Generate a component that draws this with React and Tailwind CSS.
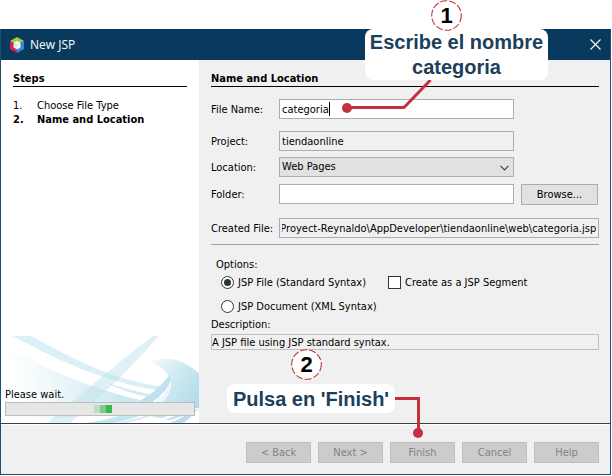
import React, { useEffect, useRef } from "react";

const FIELD =
  "block h-5 w-full rounded-none border border-[#abadb3] px-[2px] leading-[18px] text-black outline-none";

function Row({ id, label, className = "", children }) {
  return (
    <div className={`flex items-center ${className}`}>
      <label htmlFor={id} className="w-[68px] shrink-0 pt-px whitespace-nowrap">
        {label}
      </label>
      {children}
    </div>
  );
}

function Radio({ id, label, defaultChecked }) {
  return (
    <div className="flex h-[14px] items-center gap-1">
      <input
        id={id}
        type="radio"
        name="syntax"
        defaultChecked={defaultChecked}
        className="m-0 grid size-[13px] shrink-0 appearance-none place-items-center rounded-full border border-[#333] bg-white before:size-[7px] before:rounded-full checked:before:bg-[#333]"
      />
      <label htmlFor={id} className="pt-px whitespace-nowrap">
        {label}
      </label>
    </div>
  );
}

function Logo() {
  return (
    <svg width="14" height="16" viewBox="0 0 14 16" aria-hidden="true">
      <path d="M7 0 L14 4 L7 8 L0 4Z" fill="#a4cf3c" />
      <path d="M0 4 L7 8 V16 L0 12Z" fill="#d0215a" />
      <path d="M14 4 L7 8 V16 L14 12Z" fill="#2c8be0" />
      <path d="M7 4 L10.5 6 L7 8 L3.5 6Z" fill="#ffffff" />
      <path d="M3.5 6 L7 8 V12.4 L3.5 10.4Z" fill="#e4e9ee" />
      <path d="M10.5 6 L7 8 V12.4 L10.5 10.4Z" fill="#f5f8fa" />
    </svg>
  );
}

function Swoosh() {
  return (
    <svg
      className="absolute bottom-0 left-[2px] h-[87px] w-[196px]"
      viewBox="3 336 196 87"
      preserveAspectRatio="none"
      aria-hidden="true"
    >
      <defs>
        <linearGradient id="fan" gradientUnits="userSpaceOnUse" x1="20" y1="410" x2="120" y2="390">
          <stop offset="0" stopColor="#ffffff" />
          <stop offset="0.3" stopColor="#f1f9fb" />
          <stop offset="1" stopColor="#cde8f1" />
        </linearGradient>
        <linearGradient id="crescent" gradientUnits="userSpaceOnUse" x1="146" y1="358" x2="199" y2="395">
          <stop offset="0" stopColor="#ffffff" />
          <stop offset="0.4" stopColor="#d9eef5" />
          <stop offset="1" stopColor="#b3dcea" />
        </linearGradient>
      </defs>
      <path d="M3 345 C38 365 82 386 140 400 L134 412 L3 423Z" fill="url(#fan)" />
      <path d="M13 336 H31 C62 353 112 381 166 387 L164 391 C112 385 60 362 13 336Z" fill="#dceff6" />
      <path d="M102 381 C122 388 142 393 160 396 L158 399 C138 396 118 389 102 381Z" fill="#d5ecf4" />
      <path d="M153 336 H159 C140 357 114 386 70 423 H47 C88 389 128 354 153 336Z" fill="#bfe2ed" fillOpacity="0.5" />
      <path d="M147 360 C155 361 160 358 168 359 C180 359 190 366 199 373 V408 C190 412 188 418 184 423 L150 416 C162 404 174 392 170 380 C168 371 158 365 147 360Z" fill="url(#crescent)" />
      <path d="M170 375 C160 387 150 396 134 404 L150 404 C160 396 168 389 170 382Z" fill="#bfe2ee" />
      <path d="M170 384 C166 393 160 399 153 404 H160 C166 398 170 392 170 384Z" fill="#e9f5f9" />
      <path d="M124 414 H144 C136 418 124 421 112 423 H86 C100 421 114 418 124 414Z" fill="#c5e5ef" />
      <path d="M150 414 H156 C146 418 132 422 124 423 H115 C128 421 142 418 150 414Z" fill="#d0e9f2" />
      <path d="M136 423 C156 421 172 416 182 408 H199 C190 413 188 418 184 423 H150 C168 421 178 418 184 415 L178 415 C166 420 152 422 136 423Z" fill="#ffffff" />
      <path d="M199 408 C193 413 188 418 184 423 H199Z" fill="#ffffff" />
      <path d="M199 408 C187 414 180 419 170 423 H183 C189 420 194 413 199 408Z" fill="#b8deeb" />
    </svg>
  );
}

function Badge({ children, className }) {
  return (
    <div className={`absolute grid size-[31px] place-items-center ${className}`}>
      <svg className="col-start-1 row-start-1" width="31" height="31" viewBox="0 0 31 31" aria-hidden="true">
        <circle cx="15.5" cy="15.5" r="14.8" fill="#fff" stroke="#c5303f" strokeWidth="1.1" strokeDasharray="7 2" />
      </svg>
      <span className="col-start-1 row-start-1 font-['Liberation_Sans',Arial,sans-serif] text-[22px] leading-none font-bold text-black">
        {children}
      </span>
    </div>
  );
}

const CALLOUT =
  "absolute rounded-lg bg-white text-center font-['Liberation_Sans',Arial,sans-serif] text-[20px] leading-[25px] font-bold whitespace-nowrap text-[#1b405b]";

const BUTTONS = ["< Back", "Next >", "Finish", "Cancel", "Help"];

export default function App() {
  const createdFile = useRef(null);

  // Keep the end of the path, with the file name, in view.
  useEffect(() => {
    const showEnd = () => {
      createdFile.current.scrollLeft = createdFile.current.scrollWidth;
    };
    showEnd();
    window.addEventListener("resize", showEnd);
    return () => window.removeEventListener("resize", showEnd);
  }, []);

  return (
    <div className="relative flex min-h-screen flex-col bg-white pt-[29px] pr-px pb-px font-['DejaVu_Sans_Condensed','DejaVu_Sans',Tahoma,sans-serif] text-[11px] leading-[14px] text-black">
      <div className="flex flex-1 flex-col border border-t-0 border-[#1f4e75] bg-[#f0f0f0]">
        <header className="flex h-[31px] items-center bg-[#093a5e] pr-[9px] pl-[9px] text-white">
          <Logo />
          <h1 className="ml-[6px] flex-1 font-['Open_Sans','Noto_Sans',sans-serif] text-[12px] leading-4">New JSP</h1>
          <button type="button" aria-label="Close" className="grid size-3 place-items-center">
            <svg width="11" height="11" viewBox="0 0 11 11" aria-hidden="true">
              <path d="M0.5 0.5 L10.5 10.5 M10.5 0.5 L0.5 10.5" stroke="#fff" strokeWidth="1.1" />
            </svg>
          </button>
        </header>

        <main className="flex flex-1">
          <aside className="relative flex w-[198px] shrink-0 flex-col bg-white">
            <Swoosh />
            <div className="relative px-3 pt-3">
              <h2 className="border-b border-black font-bold">Steps</h2>
              <ol className="mt-3">
                <li className="flex">
                  <span className="w-6">1.</span>Choose File Type
                </li>
                <li className="flex font-bold">
                  <span className="w-6">2.</span>Name and Location
                </li>
              </ol>
            </div>
            <div className="relative mt-auto pr-1 pb-[7px] pl-1">
              <p id="wait">Please wait.</p>
              <div
                role="progressbar"
                aria-labelledby="wait"
                className="flex h-[14px] items-center justify-center border border-[#bcbcbc] bg-[#e6e6e6]"
              >
                <span className="ml-[6px] h-2 w-[6px] bg-[#b8dfc0]" />
                <span className="h-2 w-[6px] bg-[#78cb8b]" />
                <span className="h-2 w-[6px] bg-[#36b94f]" />
              </div>
            </div>
          </aside>

          <form className="min-w-0 flex-1 pt-3 pr-[11px] pl-3" onSubmit={(e) => e.preventDefault()}>
            <h2 className="border-b border-black font-bold">Name and Location</h2>
            <Row id="name" label="File Name:" className="mt-3 pr-[85px]">
              <div className="relative flex-1">
                <input id="name" defaultValue="categoria" className={`${FIELD} bg-white`} />
                <span className="absolute top-[3px] left-[50px] h-[14px] w-px bg-black" />
              </div>
            </Row>
            <Row id="project" label="Project:" className="mt-3 pr-[85px]">
              <input id="project" readOnly defaultValue="tiendaonline" className={`${FIELD} bg-[#f0f0f0]`} />
            </Row>
            <Row id="location" label="Location:" className="mt-[6px] pr-[85px]">
              <div className="relative flex-1">
                <select id="location" className={`${FIELD} appearance-none bg-[#e1e1e1]`}>
                  <option>Web Pages</option>
                </select>
                <svg className="pointer-events-none absolute top-2 right-[5px]" width="9" height="6" viewBox="0 0 9 6" aria-hidden="true">
                  <path d="M0.5 0.8 L4.5 4.8 L8.5 0.8" fill="none" stroke="#444" strokeWidth="1.2" />
                </svg>
              </div>
            </Row>
            <div className="mt-[7px] flex items-start gap-[7px] pr-px">
              <Row id="folder" label="Folder:" className="flex-1">
                <input id="folder" className={`${FIELD} bg-white`} />
              </Row>
              <button type="button" className="h-[21px] w-[77px] border border-[#adadad] bg-[#e1e1e1]">
                Browse...
              </button>
            </div>
            <Row id="created" label="Created File:" className="mt-[13px]">
              <input
                ref={createdFile}
                id="created"
                readOnly
                defaultValue="\Proyect-Reynaldo\AppDeveloper\tiendaonline\web\categoria.jsp"
                className={`${FIELD} bg-[#f0f0f0]`}
              />
            </Row>
            <hr className="mt-[6px] border-[#a0a0a0]" />

            <fieldset className="mt-[13px] pl-[5px]">
              <legend className="mb-[3px]">Options:</legend>
              <div className="flex items-center gap-[22px] pl-[5px]">
                <Radio id="standard" label="JSP File (Standard Syntax)" defaultChecked />
                <div className="flex items-center gap-1">
                  <input
                    id="segment"
                    type="checkbox"
                    className="m-0 size-[13px] appearance-none border border-[#333] bg-white checked:bg-[#333]"
                  />
                  <label htmlFor="segment" className="pt-px whitespace-nowrap">
                    Create as a JSP Segment
                  </label>
                </div>
              </div>
              <div className="mt-[9px] pl-[5px]">
                <Radio id="document" label="JSP Document (XML Syntax)" />
              </div>
            </fieldset>
            <label htmlFor="description" className="mt-[5px] block">
              Description:
            </label>
            <input
              id="description"
              readOnly
              defaultValue="A JSP file using JSP standard syntax."
              className="mt-[2px] block h-4 w-full border border-[#c0c0c0] bg-[#f0f0f0] leading-[14px] outline-none"
            />
          </form>
        </main>

        <footer className="flex justify-end gap-[7px] border-t border-[#3f3f3f] pt-[18px] pr-[11px] pb-[11px] shadow-[inset_0_1px_0_#fff]">
          {BUTTONS.map((label) => (
            <button
              key={label}
              type="button"
              disabled
              className="h-[21px] w-[65px] border border-[#bfbfbf] bg-[#cccccc] text-[#838383]"
            >
              {label}
            </button>
          ))}
        </footer>
      </div>

      <svg className="pointer-events-none absolute top-0 left-0" width="612" height="476" viewBox="0 0 612 476" aria-hidden="true">
        <g fill="none" stroke="#c5303f" strokeWidth="3">
          <path d="M347 107.5 H404 L430.5 80" />
          <path d="M395 398.5 H418.5 V430" />
        </g>
        <circle cx="347" cy="108" r="5" fill="#c5303f" />
        <circle cx="418" cy="433" r="5" fill="#c5303f" />
      </svg>
      <p className={`${CALLOUT} top-[29px] left-[365px] w-[183px] pt-px`}>
        Escribe el nombre
        <br />
        categoria
      </p>
      <p className={`${CALLOUT} top-[384px] left-[227px] w-[168px] pt-[3px] pb-px`}>Pulsa en &apos;Finish&apos;</p>
      <Badge className="top-0 left-[431px]">1</Badge>
      <Badge className="top-[349px] left-[291px]">2</Badge>
    </div>
  );
}
